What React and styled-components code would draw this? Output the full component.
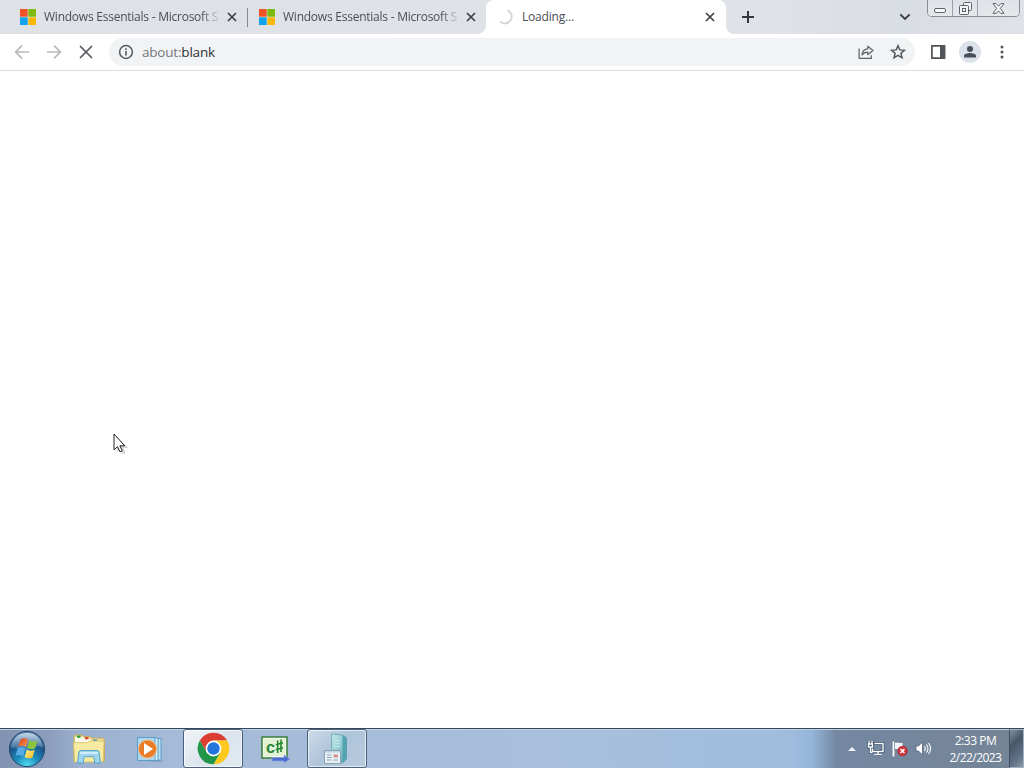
import React from "react";
import styled, { createGlobalStyle, css } from "styled-components";

const GlobalStyle = createGlobalStyle`
	html, body, #root {
		margin: 0;
		width: 100%;
		height: 100%;
		overflow: hidden;
	}
	body {
		font-family: "Open Sans", "Noto Sans", sans-serif;
		background: #fefffe;
	}
	svg {
		display: block;
		flex: none;
	}
`

const MicrosoftLogo = () => (
	<svg width="16" height="16" viewBox="0 0 16 16">
		<path fill="#f25326" d="M0 0h7.7v7.7H0z"/>
		<path fill="#7fba10" d="M8.3 0H16v7.7H8.3z"/>
		<path fill="#12a3ee" d="M0 8.3h7.7V16H0z"/>
		<path fill="#fdb90b" d="M8.3 8.3H16V16H8.3z"/>
	</svg>
);

const Spinner = () => (
	<svg width="16" height="16" viewBox="0 0 16 16" fill="none" stroke="#d3d5d8" strokeWidth="2">
		<path d="M9.5 1.3A6.8 6.8 0 1 1 2.2 12.5"/>
	</svg>
);

const TabCross = () => (
	<svg width="10" height="10" viewBox="0 0 10 10" stroke="#3c4043" strokeWidth="1.7">
		<path d="M1 1l8 8M9 1L1 9"/>
	</svg>
);

const PlusIcon = () => (
	<svg width="12" height="12" viewBox="0 0 12 12" stroke="#34373b" strokeWidth="2">
		<path d="M6 0v12M0 6h12"/>
	</svg>
);

const ChevronIcon = () => (
	<svg width="12" height="8" viewBox="0 0 12 8" fill="none" stroke="#3c4043" strokeWidth="1.9">
		<path d="M1.3 1.3L6 6l4.7-4.7"/>
	</svg>
);

const ArrowIcon = ({ back }) => (
	<svg width="16" height="16" viewBox="0 0 16 16" fill="none" stroke="#b7b9bc" strokeWidth="1.7">
		{back
			? <path d="M15 8H2M8 1.6L1.6 8 8 14.4"/>
			: <path d="M1 8h13M8 1.6L14.4 8 8 14.4"/>}
	</svg>
);

const StopIcon = () => (
	<svg width="14" height="14" viewBox="0 0 14 14" stroke="#55585c" strokeWidth="1.7">
		<path d="M1 1l12 12M13 1L1 13"/>
	</svg>
);

const InfoIcon = () => (
	<svg width="16" height="16" viewBox="0 0 16 16" fill="none" stroke="#55595e">
		<circle cx="8" cy="8" r="6.4" strokeWidth="1.5"/>
		<path d="M8 7v4.5M8 4.3v1.6" strokeWidth="1.6"/>
	</svg>
);

const ShareIcon = () => (
	<svg width="16" height="16" viewBox="0 0 16 16" fill="none" stroke="#606367" strokeWidth="1.2">
		<path d="M1.1 4.5v9.9h12.2v-3.2"/>
		<path d="M4 11c.4-4 2.6-6 5.8-6.1V2.2L15 6.5l-5.2 4.2V8.1C7.4 8 5.5 9 4 11z" strokeLinejoin="round"/>
	</svg>
);

const StarIcon = () => (
	<svg width="16" height="16" viewBox="0 0 16 16" fill="none" stroke="#53575c" strokeWidth="1.5">
		<path d="M8 1.7l1.8 4.2 4.6.4-3.5 3 1.1 4.5-4-2.4-4 2.4 1.1-4.5-3.5-3 4.6-.4z"/>
	</svg>
);

const PanelIcon = () => (
	<svg width="15" height="14" viewBox="0 0 15 14">
		<path d="M.9.9h12.7v12.2H.9z" fill="#fff" stroke="#515459" strokeWidth="1.7"/>
		<path d="M9 1h5v12H9z" fill="#515459"/>
	</svg>
);

const PersonIcon = () => (
	<svg width="14" height="14" viewBox="0 0 14 14" fill="#474e58">
		<circle cx="7" cy="4" r="3"/>
		<path d="M1 12.6v-1.7C1 8.9 4.6 8 7 8s6 .9 6 2.9v1.7z"/>
	</svg>
);

const DotsIcon = () => (
	<svg width="4" height="14" viewBox="0 0 4 14" fill="#505358">
		<circle cx="2" cy="2" r="1.5"/>
		<circle cx="2" cy="7" r="1.5"/>
		<circle cx="2" cy="12" r="1.5"/>
	</svg>
);

const MinimizeGlyph = () => (
	<svg width="13" height="6" viewBox="0 0 13 6">
		<rect x=".5" y=".5" width="11" height="4" rx="1.5" fill="#f7f8fa" stroke="#5f646c"/>
	</svg>
);

const RestoreGlyph = () => (
	<svg width="13" height="13" viewBox="0 0 13 13" fill="#f4f5f7" stroke="#5b6068">
		<rect x="4.5" y=".5" width="8" height="8" rx="1"/>
		<rect x=".5" y="3.5" width="9" height="9" rx="1"/>
		<rect x="3.5" y="6.5" width="3" height="3"/>
	</svg>
);

const CloseGlyph = () => (
	<svg width="13" height="11" viewBox="0 0 13 11">
		<path
			d="M1 .6h3.2l2.3 2.5L8.8.6H12L8.3 5.4l3.7 5H8.8L6.5 7.8l-2.3 2.6H1l3.7-5z"
			fill="#f7f8fa"
			stroke="#5f646c"
			strokeLinejoin="round"
		/>
	</svg>
);

const StartOrb = () => (
	<svg width="38" height="38" viewBox="0 0 38 38">
		<defs>
			<radialGradient id="orb" cx=".5" cy=".98" r=".95">
				<stop offset="0" stopColor="#55e0f6"/>
				<stop offset=".35" stopColor="#1c8dbd"/>
				<stop offset=".7" stopColor="#1b5288"/>
				<stop offset="1" stopColor="#5d86b0"/>
			</radialGradient>
			<linearGradient id="orbShine" x1="0" y1="0" x2="0" y2="1">
				<stop offset="0" stopColor="#d9e8f4" stopOpacity=".85"/>
				<stop offset="1" stopColor="#8fb2d0" stopOpacity=".25"/>
			</linearGradient>
			<linearGradient id="flagRed" x1="0" y1="0" x2="1" y2="1">
				<stop offset="0" stopColor="#d8401c"/>
				<stop offset="1" stopColor="#fa9a55"/>
			</linearGradient>
			<linearGradient id="flagYellow" x1="0" y1="0" x2="1" y2="1">
				<stop offset="0" stopColor="#fff2a0"/>
				<stop offset="1" stopColor="#fbb410"/>
			</linearGradient>
		</defs>
		<circle cx="19" cy="19" r="17.6" fill="url(#orb)" stroke="#254668" strokeWidth="1"/>
		<path d="M3 18C4 9 10 3 19 3s15 6 16 15c-7-5-12 2-18 2S8 16 3 18z" fill="url(#orbShine)"/>
		<path d="M12.6 9.2c2.9-1.4 5.2-1.1 7.5.4l-2.1 7.5c-2.4-1.500-4.800-1.700-7.800-.5z" fill="url(#flagRed)"/>
		<path d="M21.300 10.300c2.500 1.600 4.900 1.700 8.100.3l-2.300 7.700c-2.900 1.300-5.400 1.100-7.900-.5z" fill="#8cc63c"/>
		<path d="M9.700 18.100c2.900-1.200 5.200-1 7.700.5l-2.100 7.600c-2.500-1.600-4.900-1.700-7.700-.5z" fill="#58aae5"/>
		<path d="M18.800 19.400c2.500 1.600 5 1.700 7.900.4l-2.200 7.700c-2.900 1.300-5.400 1.100-7.900-.5z" fill="url(#flagYellow)"/>
	</svg>
);

const ExplorerIcon = () => (
	<svg width="34" height="30" viewBox="0 0 34 30">
		<path d="M2 2.500q0-1.500 1.500-1.500h7l1 1.500h7l1 1.500h11q2 0 2 2v21H2z" fill="#e9d68a" stroke="#bfa657" strokeWidth=".8"/>
		<path d="M3 3h8l1 1.500h6l1 2h11v4H3z" fill="#fffbea"/>
		<path d="M5 1.500h3.500v2.300H5z" fill="#27a13d"/>
		<path d="M13 3h3.500v2.300H13z" fill="#d6492f"/>
		<path d="M21 5.500h4v2h-4z" fill="#3f91ce"/>
		<path d="M1.500 8.700h14l2-1.700h14.700L31 28H2.500z" fill="#f7eba3" stroke="#d5bb5c" strokeWidth=".8"/>
		<path d="M5.500 29l1.300-10.500q.2-2 2-2h16.400q1.800 0 2 2L28.500 29h-5.800l-.7-5.500q-.1-.8-1-.8h-8q-.8 0-1 .8l-.7 5.500z" fill="#9dd5ee" stroke="#4c9fc6" strokeWidth=".9"/>
		<path d="M8 19h18" stroke="#dcf4fd" strokeWidth="1.500"/>
	</svg>
);

const MediaPlayerIcon = () => (
	<svg width="30" height="28" viewBox="0 0 30 28">
		<path d="M22 25.500h7L25 27H10z" fill="#61799a" opacity=".4"/>
		<path d="M7.500 3.500h17.500v21.500H7.500z" fill="#b7e0f3" stroke="#5a9fc9"/>
		<path d="M4.500 3h17.500v22.500H4.500z" fill="#d5eefa" stroke="#5a9fc9"/>
		<path d="M1.500 2.500h17.500v23H1.500z" fill="#afd7ef" stroke="#5a9fc9"/>
		<circle cx="11.500" cy="14" r="9" fill="#e87b25" stroke="#f8b678"/>
		<path d="M8 8l9 6-9 6z" fill="#fff"/>
	</svg>
);

const ChromeLogo = () => (
	<svg width="33" height="33" viewBox="0 0 48 48">
		<path d="M4.080 12.500A23 23 0 0 1 43.920 12.500H24L14.040 29.750z" fill="#dc3c31"/>
		<path d="M24 12.500H43.920A23 23 0 0 1 24 47L33.960 29.750z" fill="#fdc91c"/>
		<path d="M33.960 29.750L24 47A23 23 0 0 1 4.080 12.500L14.040 29.750z" fill="#21964a"/>
		<circle cx="24" cy="24" r="11.500" fill="#fff"/>
		<circle cx="24" cy="24" r="9" fill="#2475dc"/>
	</svg>
);

const CSharpIcon = () => (
	<svg width="32" height="28" viewBox="0 0 32 28">
		<path d="M3 2h25v21H3z" fill="#f2fae9" stroke="#397d39" strokeWidth="1.500"/>
		<path d="M5 4h21v17H5z" fill="#e1f2d5"/>
		<text x="7" y="18" fontFamily="Liberation Sans" fontSize="17" fontWeight="700" fill="#288532" textLength="9" lengthAdjust="spacingAndGlyphs">c</text>
		<path d="M18.700 5.500v12.500M22 4.500v12.500M16.700 9.800l7.300-2M16.700 14.800l7.300-2" stroke="#288532" strokeWidth="1.600"/>
		<path d="M13 22.500h12V20l6 4-6 4V26H13z" fill="#4b6cce" stroke="#8da6e2" strokeWidth=".7"/>
	</svg>
);

const ServerIcon = () => (
	<svg width="30" height="34" viewBox="0 0 30 34">
		<defs>
			<linearGradient id="tower" x1="0" y1="0" x2="1" y2="1">
				<stop offset="0" stopColor="#c5e8ea"/>
				<stop offset=".6" stopColor="#86c3cd"/>
				<stop offset="1" stopColor="#4d9dae"/>
			</linearGradient>
		</defs>
		<path d="M9.500 2l11 1 4 4v20l-4 4-11-2z" fill="url(#tower)" stroke="#68a5b1" strokeWidth=".8"/>
		<path d="M20.500 3q4.500 1 4.500 5v18l-4.500 5z" fill="#55a3b1"/>
		<path d="M12 8l6 1M12 11l6 1M12 14l6 1" stroke="#c9ecee"/>
		<path d="M2.500 18.500h16v13h-16z" fill="#eaf1f5" stroke="#8ba3b1"/>
		<path d="M3 19h15v1.500H3z" fill="#bdd3de"/>
		<path d="M5 23h4.500M5 25.500h4.500M5 28h4.500M11.500 28h4.500" stroke="#8ba2bc"/>
		<path d="M11.500 22.500h4.500v3h-4.500z" fill="#d68d96"/>
	</svg>
);

const NetworkIcon = () => (
	<svg width="18" height="17" viewBox="0 0 18 17" fill="none">
		<path d="M5.500 3.500h10.500v8H5.500zM8 14.500h6M11 11.500v3M3.500 7v5.500H6M2 1v3M5 1v3M1.500 4h4v3h-4z" stroke="#354e6b" strokeWidth="2.800"/>
		<path d="M7.500 3.500h8.500v8H5.500V8.500M7.500 14.500h7M11 11.500v3M3.500 7v5.500H5.500M2 1v3M5 1v3M1.500 4h4v3h-4z" stroke="#fff" strokeWidth="1.400"/>
	</svg>
);

const FlagIcon = () => (
	<svg width="18" height="17" viewBox="0 0 18 17">
		<path d="M2.500 1.500v15" stroke="#fff" strokeWidth="1.800"/>
		<path d="M3.500 2.500c3-1 5 .8 8.500 0v7c-3 1-5-.8-8.500 0z" fill="#f4f7fa" stroke="#65798e" strokeWidth=".6"/>
		<circle cx="11.500" cy="11" r="4.800" fill="#d3303a" stroke="#9f202d" strokeWidth=".6"/>
		<path d="M9.500 9l4 4M13.500 9l-4 4" stroke="#fff" strokeWidth="1.600"/>
	</svg>
);

const SpeakerIcon = () => (
	<svg width="17" height="17" viewBox="0 0 17 17" fill="none">
		<path d="M1 6h2.500l4-4v13l-4-4H1z" fill="#fff" stroke="#45586e" strokeWidth=".7"/>
		<path d="M9.500 6q1.500 2.500 0 5M11.500 4.500q3 4 0 8M13.500 3q4.200 5.500 0 11" stroke="#fff" strokeWidth="1.100"/>
	</svg>
);

const PointerIcon = () => (
	<svg width="16" height="22" viewBox="0 0 16 22">
		<path d="M2 2v16.500l3.800-3.500 2.500 5.500 3-1.400-2.500-5.200h5z" fill="#000" opacity=".16" transform="translate(1.500 1)"/>
		<path d="M1 1v16l3.500-3.400 2.500 5.300 2.300-1-2.400-5.100h4.800z" fill="#fff" stroke="#222" strokeWidth="1"/>
	</svg>
);

const App = () => (
	<Screen>
		<GlobalStyle/>
		<TabStrip>
			<Tab>
				<MicrosoftLogo/>
				<TabTitle>Windows Essentials - Microsoft S</TabTitle>
				<TabCross/>
			</Tab>
			<Tab divided>
				<MicrosoftLogo/>
				<TabTitle>Windows Essentials - Microsoft S</TabTitle>
				<TabCross/>
			</Tab>
			<Tab active>
				<Spinner/>
				<TabTitle loading>Loading...</TabTitle>
				<TabCross/>
			</Tab>
			<NewTab><PlusIcon/></NewTab>
			<TabSearch><ChevronIcon/></TabSearch>
			<WindowControls>
				<WindowButton size={24}><MinimizeGlyph/></WindowButton>
				<WindowButton size={24}><RestoreGlyph/></WindowButton>
				<WindowButton size={41}><CloseGlyph/></WindowButton>
			</WindowControls>
		</TabStrip>
		<Toolbar>
			<NavButtons>
				<ArrowIcon back/>
				<ArrowIcon/>
				<StopIcon/>
			</NavButtons>
			<Omnibox>
				<InfoIcon/>
				<Address><Scheme>about:</Scheme>blank</Address>
				<ShareIcon/>
				<StarIcon/>
			</Omnibox>
			<PanelIcon/>
			<Avatar><PersonIcon/></Avatar>
			<DotsIcon/>
		</Toolbar>
		<Page/>
		<Taskbar>
			<StartButton><StartOrb/></StartButton>
			<TaskButton><ExplorerIcon/></TaskButton>
			<TaskButton><MediaPlayerIcon/></TaskButton>
			<TaskButton open current><ChromeLogo/></TaskButton>
			<TaskButton><CSharpIcon/></TaskButton>
			<TaskButton open><ServerIcon/></TaskButton>
			<Tray>
				<TrayArrow/>
				<NetworkIcon/>
				<FlagIcon/>
				<SpeakerIcon/>
				<Clock>
					<ClockLine time>2:33 PM</ClockLine>
					<ClockLine>2/22/2023</ClockLine>
				</Clock>
				<ShowDesktop/>
			</Tray>
		</Taskbar>
		<Pointer><PointerIcon/></Pointer>
	</Screen>
);

export default App;

const keep = (...names) => ({ shouldForwardProp: prop => !names.includes(prop) });

const Screen = styled.div`
	width: 1024px;
	height: 768px;
	display: flex;
	flex-direction: column;
	position: relative;
	overflow: hidden;
`

const TabStrip = styled.div`
	height: 34px;
	flex: none;
	display: flex;
	padding-left: 8px;
	box-sizing: border-box;
	background: linear-gradient(90deg, #dee1e6 0%, #dfe2e7 75%, #d9dde4 88%, #dfe2e7 100%);
`

const Tab = styled.div.withConfig(keep("active", "divided"))`
	width: 239px;
	height: 34px;
	flex: none;
	display: flex;
	align-items: center;
	padding: 0 10px 0 12px;
	box-sizing: border-box;
	position: relative;
	${props => props.divided && css`
		&::before {
			content: "";
			position: absolute;
			left: 0;
			top: 8px;
			width: 1px;
			height: 19px;
			background: #85888d;
		}
	`}
	${props => props.active && css`
		width: 240px;
		padding-right: 11px;
		background: #ffffff;
		border-radius: 8px 8px 0 0;
		&::before, &::after {
			content: "";
			position: absolute;
			bottom: 0;
			width: 8px;
			height: 8px;
		}
		&::before {
			left: -8px;
			background: radial-gradient(circle at 0 0, transparent 7.5px, #ffffff 8px);
		}
		&::after {
			right: -8px;
			background: radial-gradient(circle at 100% 0, transparent 7.5px, #ffffff 8px);
		}
	`}
`

const TabTitle = styled.span.withConfig(keep("loading"))`
	flex: 1;
	min-width: 0;
	margin: 0 8px;
	white-space: nowrap;
	font-size: 12px;
	line-height: 16px;
	letter-spacing: -0.24px;
	color: #4b4e52;
	mask-image: linear-gradient(90deg, #000 158px, transparent 177px);
	${props => props.loading && css`
		letter-spacing: -0.2px;
		mask-image: none;
	`}
`

const NewTab = styled.div`
	display: flex;
	align-items: center;
	margin-left: 16px;
`

const TabSearch = styled.div`
	display: flex;
	align-items: center;
	margin-left: auto;
	margin-right: 16px;
`

const WindowControls = styled.div`
	display: flex;
	height: 17px;
	margin-right: 4px;
	box-sizing: border-box;
	border: 1px solid #878c94;
	border-top: 0;
	border-radius: 0 0 5px 5px;
	overflow: hidden;
`

const WindowButton = styled.div.withConfig(keep("size"))`
	width: ${props => props.size}px;
	height: 16px;
	display: flex;
	align-items: center;
	justify-content: center;
	background: linear-gradient(#dfe2e7, #e5e7eb);
	&:first-child {
		align-items: flex-end;
		padding-bottom: 2px;
		box-sizing: border-box;
	}
	& + & {
		border-left: 1px solid #9a9fa7;
	}
`

const Toolbar = styled.div`
	height: 37px;
	flex: none;
	display: flex;
	align-items: center;
	padding: 0 20px 0 14px;
	box-sizing: border-box;
	background: #ffffff;
	border-bottom: 1px solid #d9dbde;
`

const NavButtons = styled.div`
	display: flex;
	align-items: center;
	gap: 16px;
	margin-right: 16px;
	& svg:last-child {
		margin-left: 1px;
	}
`

const Omnibox = styled.div`
	width: 806px;
	height: 28px;
	flex: none;
	display: flex;
	align-items: center;
	gap: 16px;
	padding: 0 9px;
	margin-right: 16px;
	box-sizing: border-box;
	border-radius: 14px;
	background: #f1f3f4;
`

const Address = styled.span`
	flex: 1;
	margin-left: -8px;
	font-size: 13.5px;
	line-height: 20px;
	letter-spacing: -0.2px;
	color: #303236;
`

const Scheme = styled.span`
	color: #75797e;
`

const Avatar = styled.div`
	width: 22px;
	height: 22px;
	margin: 0 19px 0 13px;
	display: flex;
	align-items: center;
	justify-content: center;
	border-radius: 50%;
	background: #dce2e9;
`

const Page = styled.main`
	flex: 1;
	background: #fefffe;
`

const Taskbar = styled.footer`
	height: 40px;
	flex: none;
	display: flex;
	box-sizing: border-box;
	border-top: 1px solid #35485c;
	box-shadow: inset 0 1px #c1d2e2;
	background: linear-gradient(90deg, #8193b1 0, #8c9fbe 52px, #9bb0ce 78px, #a5bbd8 180px, #a7bfdc 560px, #a0bddd 790px, #95b4d8 812px, #7488a2 836px, #758496 1024px);
`

const StartButton = styled.div`
	width: 59px;
	display: flex;
	align-items: center;
	padding-left: 8px;
	box-sizing: border-box;
`

const TaskButton = styled.div.withConfig(keep("open", "current"))`
	width: 60px;
	height: 39px;
	flex: none;
	display: flex;
	align-items: center;
	justify-content: center;
	box-sizing: border-box;
	padding-top: 1px;
	margin-right: 2px;
	${props => props.open && css`
		padding-top: 0;
		border: 1px solid #4b617b;
		border-radius: 3px;
		box-shadow: inset 0 0 0 1px rgba(255, 255, 255, 0.65);
		background: linear-gradient(135deg, #d0dce9, #aec4da 45%, #b8ccdf);
	`}
	${props => props.current && css`
		background: linear-gradient(135deg, #f2f5f8, #dbe4ed 50%, #e2eaf1);
	`}
`

const Tray = styled.div`
	display: flex;
	align-items: center;
	margin-left: auto;
	& svg {
		margin-right: 6px;
	}
`

const TrayArrow = styled.i`
	border: 4px solid transparent;
	border-top: 0;
	border-bottom-color: #f0f4f8;
	margin-right: 11px;
`

const Clock = styled.div`
	width: 68px;
	padding-left: 1px;
	margin-left: 3px;
	box-sizing: border-box;
	text-align: center;
	color: #ffffff;
	font-size: 12px;
	line-height: 17px;
	white-space: nowrap;
`

const ClockLine = styled.div.withConfig(keep("time"))`
	letter-spacing: ${props => props.time ? "-0.45px" : "-0.55px"};
`

const ShowDesktop = styled.div`
	width: 15px;
	height: 39px;
	box-sizing: border-box;
	border: 1px solid #a4b1bf;
	border-left-color: #404f60;
	background: linear-gradient(135deg, #8292a3, #46576a 35%, #63758a 75%, #8a9aac);
`

const Pointer = styled.div`
	position: absolute;
	left: 113px;
	top: 433px;
`
